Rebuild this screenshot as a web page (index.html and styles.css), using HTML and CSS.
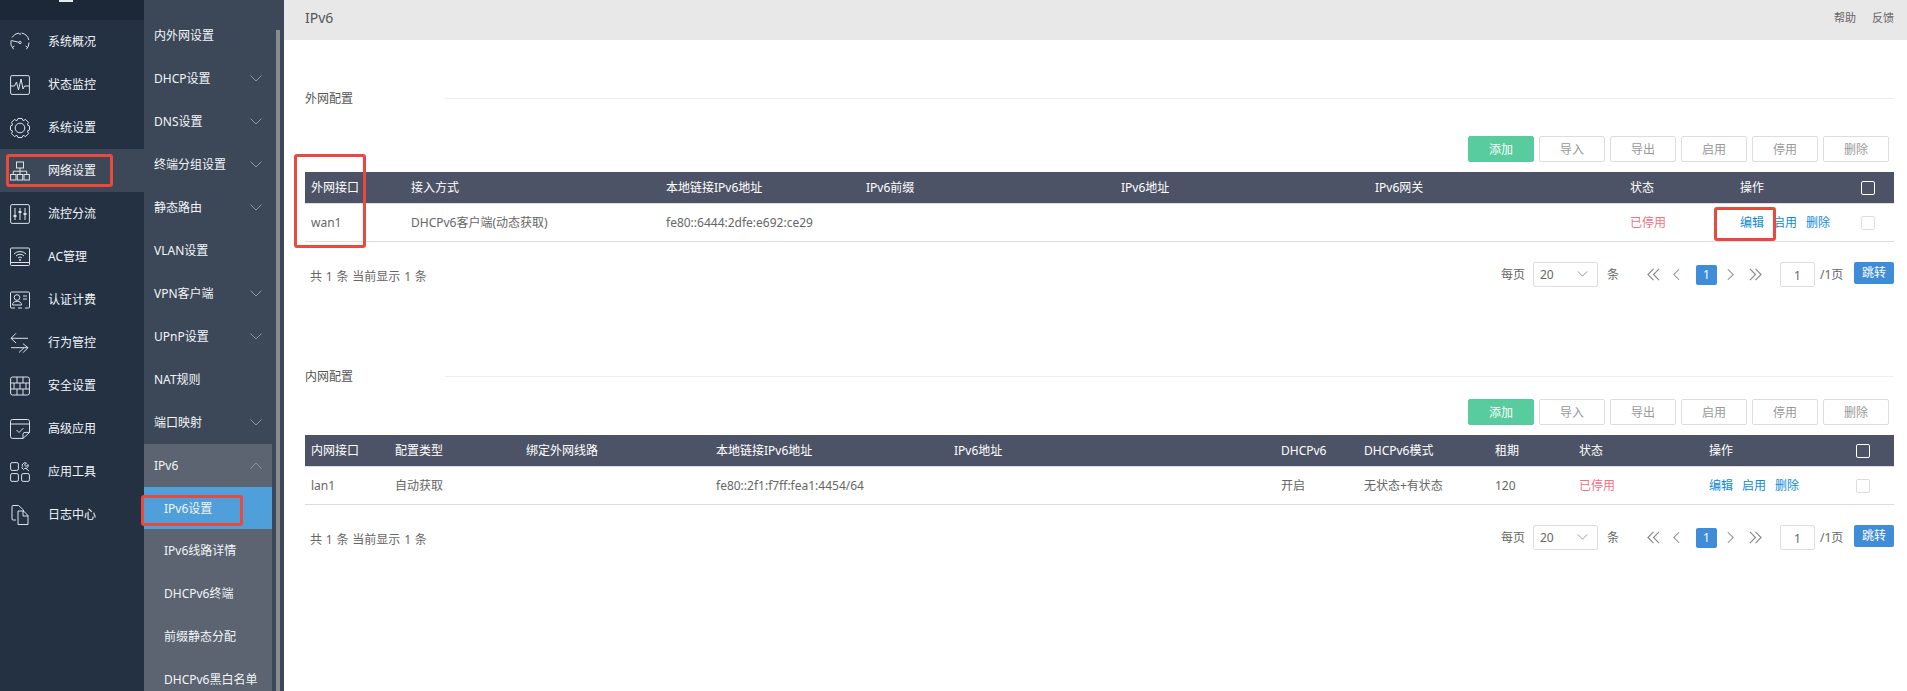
FILE: index.html
```html
<!DOCTYPE html>
<html lang="zh">
<head>
<meta charset="utf-8">
<title>IPv6</title>
<link rel="stylesheet" href="styles.css">
</head>
<body>
<div class="app">
  <nav class="rail">
    <div class="brand"><span class="brand-mark"></span></div>
    <a class="rail-item"><svg class="ico" viewBox="0 0 20 20"><path d="M3.600 17.200A9.300 9.300 0 0 1 1 8.500M2 5.500A9.300 9.300 0 0 1 9 1M11.500 1A9.300 9.300 0 0 1 18.800 8M19 10.500A9.300 9.300 0 0 1 16.400 17.200"/><path d="M10 1v2M3 15l1.400-1M17 15l-1.400-1"/><path d="M1.500 8.500L8.800 10.300"/><circle cx="10" cy="10.500" r="1.200"/></svg><span>系统概况</span></a>
    <a class="rail-item"><svg class="ico" viewBox="0 0 20 20"><rect x=".6" y=".6" width="18.800" height="18.800" rx="1.500"/><path d="M1 11h3.500l2-4 2 8 2.500-11 2 10 1.500-3H19"/></svg><span>状态监控</span></a>
    <a class="rail-item"><svg class="ico" viewBox="0 0 20 20"><path d="M7 2.600L8 .5h4l1 2.100 2.660-1.090 2.830 2.830-1.140 2.550L19.500 8v4l-2.100 1 1.090 2.660-2.830 2.830-2.550-1.140L12 19.500H8l-1-2.100-2.660 1.090-2.830-2.830 1.140-2.550L.5 12V8l2.100-1-1.090-2.660 2.830-2.830 2.550 1.140z"/><circle cx="10" cy="10" r="4.800"/></svg><span>系统设置</span></a>
    <a class="rail-item active"><svg class="ico" viewBox="0 0 20 20"><rect x="6.500" y="1" width="7" height="6"/><rect x=".6" y="13.500" width="5.400" height="5.500"/><rect x="7.300" y="13.500" width="5.400" height="5.500"/><rect x="14" y="13.500" width="5.400" height="5.500"/><path d="M10 7v3.200M3.300 13.500v-3.300h13.400v3.300M10 10.200v3.300"/></svg><span>网络设置</span></a>
    <a class="rail-item"><svg class="ico" viewBox="0 0 20 20"><rect x=".6" y=".6" width="18.800" height="18.800" rx="1.500"/><path d="M5 4v12M10 4v12M15 4v12"/><path class="fill" d="M3.500 11h3v2h-3zM8.500 7h3v2h-3zM13.500 9h3v2h-3z"/></svg><span>流控分流</span></a>
    <a class="rail-item"><svg class="ico" viewBox="0 0 20 20"><path d="M1.500 1h17a1 1 0 0 1 1 1v15.500a1 1 0 0 1-1 1h-17a1 1 0 0 1-1-1V2a1 1 0 0 1 1-1z"/><path d="M.6 15.500h18.800"/><path d="M4 7a8.500 8.500 0 0 1 12 0M6 9a5.500 5.500 0 0 1 8 0M8 11a2.600 2.600 0 0 1 4 0"/><circle class="fill" cx="10" cy="13" r="1"/></svg><span>AC管理</span></a>
    <a class="rail-item"><svg class="ico" viewBox="0 0 20 20"><path d="M5 18H1.500a1 1 0 0 1-1-1V3a1 1 0 0 1 1-1h17a1 1 0 0 1 1 1v14a1 1 0 0 1-1 1H15M8 18h4"/><circle cx="7" cy="7.500" r="2.800"/><path d="M2.500 15c0-2.600 2-3.700 4.500-3.700s4.500 1.100 4.500 3.700zM13 6h4M13 9h4"/></svg><span>认证计费</span></a>
    <a class="rail-item"><svg class="ico" viewBox="0 0 20 20"><path d="M6 .3L1 5.300l5 4.700M1 5.300h17M1 14.700h17M13 10.700l5 4-5 5M9 19.500l5-4.800"/></svg><span>行为管控</span></a>
    <a class="rail-item"><svg class="ico" viewBox="0 0 20 20"><rect x=".6" y="1" width="18.800" height="18" rx="2"/><path d="M.6 7h18.800M.6 13h18.800M7 1v6M13 1v6M4 7v6M10 7v6M16 7v6M7 13v6M13 13v6"/></svg><span>安全设置</span></a>
    <a class="rail-item"><svg class="ico" viewBox="0 0 20 20"><path d="M13 19.400H2.500a2 2 0 0 1-2-2V2.500a2 2 0 0 1 2-2h15a2 2 0 0 1 2 2v11zM13 19.400v-4a2 2 0 0 1 2-2h4.400M.6 5h18.800M6.500 11l2.500 2.500 4.500-4.500"/></svg><span>高级应用</span></a>
    <a class="rail-item"><svg class="ico" viewBox="0 0 20 20"><rect x=".6" y=".6" width="7.800" height="7.800" rx="1.500"/><rect x=".6" y="11.600" width="7.800" height="7.800" rx="1.500"/><rect x="11.600" y="11.600" width="7.800" height="7.800" rx="1.500"/><path d="M12.500 2.500a3 3 0 0 1 4-1.500l-2 2 1.500 1.500 2-2a3 3 0 0 1-3.500 4l-1 1-1.800-1.800 1-1a3 3 0 0 1-.200-2.700zM15.500 6l3.500 3"/></svg><span>应用工具</span></a>
    <a class="rail-item"><svg class="ico" viewBox="0 0 20 20"><path d="M6 15H3a1 1 0 0 1-1-1V1.500a1 1 0 0 1 1-1h5.500l5 4.500v1.500"/><path d="M8 6h5.500L18 10.500V19.500H8z"/><path d="M13 6v5h5"/></svg><span>日志中心</span></a>
  </nav>

  <aside class="submenu">
    <ul class="sub-list">
      <li class="sub-item">内容设置<svg class="chev" viewBox="0 0 12 7"><path d="M.5.500L6 6 11.500.500"/></svg></li>
      <li class="sub-item">内外网设置</li>
      <li class="sub-item">DHCP设置<svg class="chev" viewBox="0 0 12 7"><path d="M.5.500L6 6 11.500.500"/></svg></li>
      <li class="sub-item">DNS设置<svg class="chev" viewBox="0 0 12 7"><path d="M.5.500L6 6 11.500.500"/></svg></li>
      <li class="sub-item">终端分组设置<svg class="chev" viewBox="0 0 12 7"><path d="M.5.500L6 6 11.500.500"/></svg></li>
      <li class="sub-item">静态路由<svg class="chev" viewBox="0 0 12 7"><path d="M.5.500L6 6 11.500.500"/></svg></li>
      <li class="sub-item">VLAN设置</li>
      <li class="sub-item">VPN客户端<svg class="chev" viewBox="0 0 12 7"><path d="M.5.500L6 6 11.500.500"/></svg></li>
      <li class="sub-item">UPnP设置<svg class="chev" viewBox="0 0 12 7"><path d="M.5.500L6 6 11.500.500"/></svg></li>
      <li class="sub-item">NAT规则</li>
      <li class="sub-item">端口映射<svg class="chev" viewBox="0 0 12 7"><path d="M.5.500L6 6 11.500.500"/></svg></li>
      <li class="sub-item open">IPv6<svg class="chev" viewBox="0 0 12 7"><path d="M.5 6.500L6 1l5.500 5.500"/></svg></li>
      <li class="sub-child current">IPv6设置</li>
      <li class="sub-child">IPv6线路详情</li>
      <li class="sub-child">DHCPv6终端</li>
      <li class="sub-child">前缀静态分配</li>
      <li class="sub-child">DHCPv6黑白名单</li>
    </ul>
    <div class="scrollthumb"></div>
  </aside>

  <main class="main">
    <header class="topbar">
      <h1 class="page-title">IPv6</h1>
      <div class="top-links"><a>帮助</a><a>反馈</a></div>
    </header>

    <section class="panel panel-wan">
      <div class="sec-title"><span>外网配置</span><i class="rule"></i></div>
      <div class="toolbar toolbar-wan">
        <button class="btn primary">添加</button><button class="btn">导入</button><button class="btn">导出</button><button class="btn">启用</button><button class="btn">停用</button><button class="btn">删除</button>
      </div>
      <div class="grid-table wan-cols">
        <div class="thead">
          <div>外网接口</div><div>接入方式</div><div>本地链接IPv6地址</div><div>IPv6前缀</div><div>IPv6地址</div><div>IPv6网关</div><div>状态</div><div>操作</div><div><span class="check head"></span></div>
        </div>
        <div class="tbody">
          <div>wan1</div><div>DHCPv6客户端(动态获取)</div><div>fe80::6444:2dfe:e692:ce29</div><div></div><div></div><div></div><div class="off">已停用</div><div class="ops"><a>编辑</a><a>启用</a><a>删除</a></div><div><span class="check"></span></div>
        </div>
      </div>
      <div class="pager">
        <div class="total">共 1 条 当前显示 1 条</div>
        <div class="pager-right">
          <span class="label">每页</span>
          <span class="select">20<svg class="sel-chev" viewBox="0 0 12 7"><path d="M.5.500L6 6 11.500.500"/></svg></span>
          <span class="label unit">条</span>
          <svg class="pg pg-first" viewBox="0 0 14 14"><path d="M7 1L1 7l6 6M13 1L7 7l6 6"/></svg>
          <svg class="pg pg-prev" viewBox="0 0 8 14"><path d="M7 1L1 7l6 6"/></svg>
          <span class="cur">1</span>
          <svg class="pg pg-next" viewBox="0 0 8 14"><path d="M1 1l6 6-6 6"/></svg>
          <svg class="pg pg-last" viewBox="0 0 14 14"><path d="M1 1l6 6-6 6M7 1l6 6-6 6"/></svg>
          <span class="jump-input">1</span>
          <span class="label pages">/1页</span>
          <button class="jump">跳转</button>
        </div>
      </div>
    </section>

    <section class="panel panel-lan">
      <div class="sec-title"><span>内网配置</span><i class="rule"></i></div>
      <div class="toolbar toolbar-lan">
        <button class="btn primary">添加</button><button class="btn">导入</button><button class="btn">导出</button><button class="btn">启用</button><button class="btn">停用</button><button class="btn">删除</button>
      </div>
      <div class="grid-table lan-cols">
        <div class="thead">
          <div>内网接口</div><div>配置类型</div><div>绑定外网线路</div><div>本地链接IPv6地址</div><div>IPv6地址</div><div>DHCPv6</div><div>DHCPv6模式</div><div>租期</div><div>状态</div><div>操作</div><div><span class="check head"></span></div>
        </div>
        <div class="tbody">
          <div>lan1</div><div>自动获取</div><div></div><div>fe80::2f1:f7ff:fea1:4454/64</div><div></div><div>开启</div><div>无状态+有状态</div><div>120</div><div class="off">已停用</div><div class="ops"><a>编辑</a><a>启用</a><a>删除</a></div><div><span class="check"></span></div>
        </div>
      </div>
      <div class="pager">
        <div class="total">共 1 条 当前显示 1 条</div>
        <div class="pager-right">
          <span class="label">每页</span>
          <span class="select">20<svg class="sel-chev" viewBox="0 0 12 7"><path d="M.5.500L6 6 11.500.500"/></svg></span>
          <span class="label unit">条</span>
          <svg class="pg pg-first" viewBox="0 0 14 14"><path d="M7 1L1 7l6 6M13 1L7 7l6 6"/></svg>
          <svg class="pg pg-prev" viewBox="0 0 8 14"><path d="M7 1L1 7l6 6"/></svg>
          <span class="cur">1</span>
          <svg class="pg pg-next" viewBox="0 0 8 14"><path d="M1 1l6 6-6 6"/></svg>
          <svg class="pg pg-last" viewBox="0 0 14 14"><path d="M1 1l6 6-6 6M7 1l6 6-6 6"/></svg>
          <span class="jump-input">1</span>
          <span class="label pages">/1页</span>
          <button class="jump">跳转</button>
        </div>
      </div>
    </section>
  </main>
</div>
<div class="mark mark-net"></div>
<div class="mark mark-v6"></div>
<div class="mark mark-wan"></div>
<div class="mark mark-edit"></div>
</body>
</html>
```
FILE: styles.css
```css
* { box-sizing: border-box; }
html, body { margin: 0; height: 691px; overflow: hidden; background: #fff; }
body { font: 12px/1.4 "Noto Sans", "Noto Sans CJK SC", sans-serif; color: #666; }
ul { list-style: none; margin: 0; padding: 0; }
.app { display: flex; height: 691px; overflow: hidden; }

/* rail */
.rail { width: 144px; flex: none; background: #233143; }
.brand { height: 20px; background: #1c2838; position: relative; }
.brand-mark { display: block; margin-left: 59px; width: 14px; height: 2px; background: #e6e9ed; }
.rail-item { display: flex; align-items: center; height: 43px; padding-left: 10px; color: #f2f5f8; font-size: 12px; }
.rail-item.active { background: #3c4858; }
.rail-item span { margin-left: 18px; padding-top: 2px; }
.ico { width: 20px; height: 20px; flex: none; fill: none; stroke: #dfe3e8; stroke-width: 1; overflow: visible; }
.ico .fill { fill: #dfe3e8; stroke: none; }

/* submenu */
.submenu { width: 140px; flex: none; background: #3c4858; position: relative; overflow: hidden; }
.sub-list { width: 128px; margin-top: -29px; }
.sub-item, .sub-child { position: relative; height: 43px; display: flex; align-items: center; padding-top: 2px; color: #f2f5f8; font-size: 12px; }
.sub-item { padding-left: 10px; }
.sub-child { padding-left: 20px; background: #5c6471; }
.sub-item.open { background: #5c6471; }
.sub-child.current { background: #4f9fdb; height: 42px; }
.chev { position: absolute; left: 106px; top: 18px; width: 12px; height: 7px; fill: none; stroke: #8d96a3; stroke-width: 1; }
.scrollthumb { position: absolute; left: 132px; top: 30px; bottom: 0; width: 4px; background: #8a8a8a; }

/* main */
.main { flex: 1; min-width: 0; }
.topbar { height: 40px; background: #e8e8e8; display: flex; align-items: center; justify-content: space-between; padding: 0 13px 5px 21px; }
.page-title { margin: 0; font-size: 14px; font-weight: 400; color: #555; }
.top-links { display: flex; gap: 16px; font-size: 11px; color: #666; }
.panel { padding: 0 13px 0 21px; }
.panel-wan { padding-top: 48px; }
.panel-lan { padding-top: 79px; }
.sec-title { display: flex; align-items: center; height: 20px; color: #555; }
.sec-title span { width: 140px; flex: none; padding-top: 2px; }
.rule { flex: 1; height: 1px; background: #eee; }
.toolbar { display: flex; justify-content: flex-end; gap: 5px; padding-right: 5px; }
.toolbar-wan { margin-top: 28px; }
.toolbar-lan { margin-top: 13px; }
.btn { width: 66px; height: 26px; padding: 2px 0 0; border: 1px solid #ddd; border-radius: 2px; background: #fff; color: #999; font: inherit; }
.btn.primary { background: #58cc9e; border-color: #58cc9e; color: #fff; }

/* tables */
.grid-table { margin-top: 10px; }
.thead, .tbody { display: grid; align-items: center; }
.wan-cols .thead, .wan-cols .tbody { grid-template-columns: 100px 255px 200px 255px 254px 255px 110px 121px 39px; }
.lan-cols .thead, .lan-cols .tbody { grid-template-columns: 84px 131px 190px 238px 327px 83px 131px 84px 130px 147px 44px; }
.thead { height: 32px; background: #4d5366; color: #fff; border-bottom: 1px solid #ddd; }
.tbody { height: 38px; border-bottom: 1px solid #ddd; color: #666; }
.thead > div, .tbody > div { padding: 2px 0 0 6px; white-space: nowrap; }
.thead > div:last-child, .tbody > div:last-child { padding-top: 0; }
.off { color: #f5707f; }
.ops { display: flex; gap: 9px; }
.ops a { color: #0d8bd6; }
.check { display: block; width: 14px; height: 14px; border: 1px solid #ddd; border-radius: 2px; background: #fff; }
.check.head { background: transparent; border-color: #fff; }

/* pager */
.pager { display: flex; justify-content: space-between; align-items: flex-start; margin-top: 20px; height: 25px; }
.total { padding-left: 5px; line-height: 30px; word-spacing: .7px; }
.pager-right { display: flex; align-items: center; height: 25px; color: #666; }
.label { padding-top: 2px; }
.select { position: relative; display: flex; align-items: center; width: 65px; height: 25px; margin-left: 8px; padding: 2px 0 0 6px; border: 1px solid #ddd; border-radius: 2px; }
.sel-chev { position: absolute; right: 9px; top: 8px; width: 11px; height: 6px; fill: none; stroke: #888; stroke-width: 1; }
.unit { margin-left: 9px; }
.pg { fill: none; stroke: #888; stroke-width: 1.2; height: 13px; }
.pg-first { width: 13px; margin-left: 28px; }
.pg-prev { width: 7px; margin-left: 13px; }
.cur { width: 21px; height: 20px; margin-left: 16px; background: #3f8cd8; color: #fff; border-radius: 2px; text-align: center; line-height: 20px; }
.pg-next { width: 7px; margin-left: 10px; }
.pg-last { width: 13px; margin-left: 15px; }
.jump-input { width: 35px; height: 25px; margin-left: 18px; border: 1px solid #ddd; border-radius: 2px; text-align: center; line-height: 25px; }
.pages { width: 24px; margin-left: 5px; }
.jump { width: 40px; height: 22px; margin-left: 10px; align-self: flex-start; padding: 1px 0 0; border: 0; border-radius: 2px; background: #3f8cd8; color: #fff; font: inherit; }

/* red annotation boxes */
.mark { position: absolute; border: 3px solid #ea4a3d; border-radius: 3px; }
.mark-net { left: 6px; top: 154px; width: 107px; height: 33px; }
.mark-v6 { left: 141px; top: 495px; width: 102px; height: 31px; }
.mark-wan { left: 294px; top: 154px; width: 72px; height: 94px; }
.mark-edit { left: 1714px; top: 207px; width: 62px; height: 34px; }
```
